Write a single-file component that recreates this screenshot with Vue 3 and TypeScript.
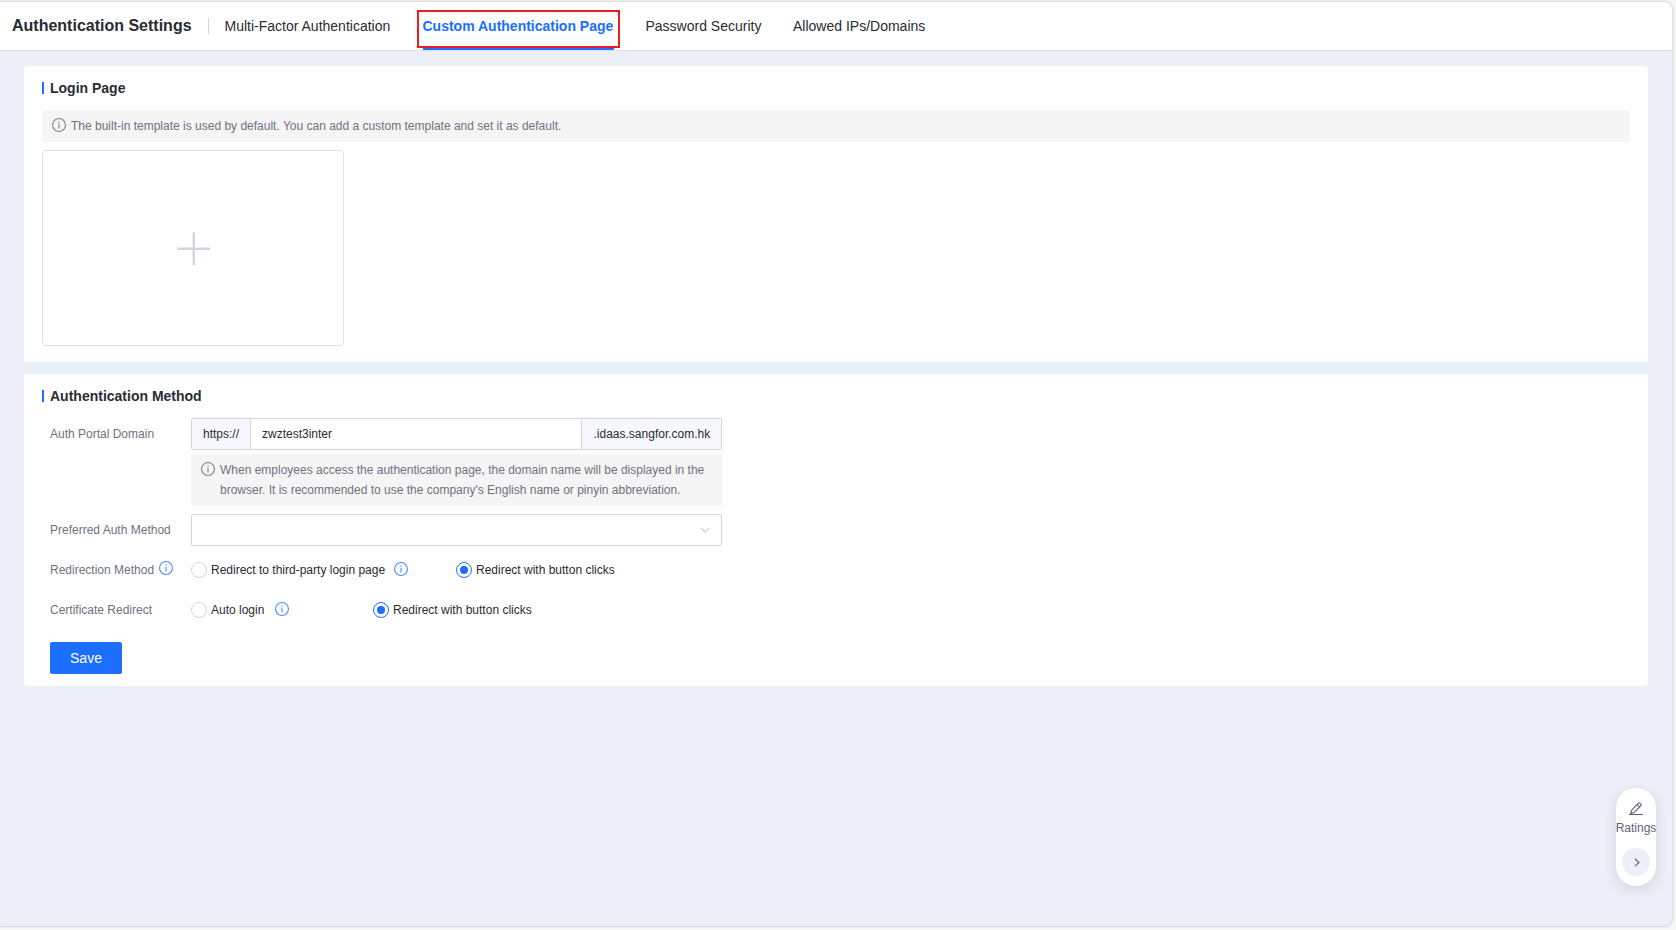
<script setup lang="ts">
import { ref } from 'vue'

interface Tab {
  key: string
  label: string
}

const tabs: Tab[] = [
  { key: 'mfa', label: 'Multi-Factor Authentication' },
  { key: 'custom', label: 'Custom Authentication Page' },
  { key: 'password', label: 'Password Security' },
  { key: 'allowed', label: 'Allowed IPs/Domains' },
]
const activeTab = ref<string>('custom')
const domain = ref<string>('zwztest3inter')
const redirection = ref<'auto' | 'click'>('click')
const certificate = ref<'auto' | 'click'>('click')
</script>

<template>
  <div class="page">
    <div class="window">
      <header class="header">
        <h1 class="title">Authentication Settings</h1>
        <span class="divider"></span>
        <nav class="tabs">
          <a
            v-for="tab in tabs"
            :key="tab.key"
            class="tab"
            :class="[tab.key, { active: tab.key === activeTab }]"
            @click="activeTab = tab.key"
          >{{ tab.label }}</a>
        </nav>
      </header>

      <main class="content">
        <section class="card login">
          <h2 class="card-title">Login Page</h2>
          <div class="notice">
            <svg class="info" viewBox="0 0 14 14"><circle cx="7" cy="7" r="6.45" /><path d="M7 5.8V10.4M7 3.5V4.7" /></svg>
            <span class="notice-text">The built-in template is used by default. You can add a custom template and set it as default.</span>
          </div>
          <div class="upload">
            <svg class="plus" viewBox="0 0 33 33"><path d="M0.4 16.8H33M16.8 0.4V33" /></svg>
          </div>
        </section>

        <section class="card method">
          <h2 class="card-title">Authentication Method</h2>

          <div class="row domain-row">
            <label class="label">Auth Portal Domain</label>
            <div class="field">
              <div class="group">
                <span class="addon pre">https://</span>
                <input v-model="domain" class="input" type="text" spellcheck="false" />
                <span class="addon post">.idaas.sangfor.com.hk</span>
              </div>
              <div class="hint">
                <svg class="info" viewBox="0 0 14 14"><circle cx="7" cy="7" r="6.45" /><path d="M7 5.8V10.4M7 3.5V4.7" /></svg>
                <p>When employees access the authentication page, the domain name will be displayed in the<br />browser. It is recommended to use the company's English name or pinyin abbreviation.</p>
              </div>
            </div>
          </div>

          <div class="row select-row">
            <label class="label">Preferred Auth Method</label>
            <div class="select">
              <svg class="chevron" viewBox="0 0 10 6"><path d="M1 1L5 5L9 1" /></svg>
            </div>
          </div>

          <div class="row radio-row">
            <label class="label">Redirection Method
              <svg class="info blue raised" viewBox="0 0 14 14"><circle cx="7" cy="7" r="6.45" /><path d="M7 5.8V10.4M7 3.5V4.7" /></svg>
            </label>
            <div class="option first" @click="redirection = 'auto'">
              <i class="radio" :class="{ on: redirection === 'auto' }"></i>
              <span>Redirect to third-party login page</span>
              <svg class="info blue" viewBox="0 0 14 14"><circle cx="7" cy="7" r="6.45" /><path d="M7 5.8V10.4M7 3.5V4.7" /></svg>
            </div>
            <div class="option" @click="redirection = 'click'">
              <i class="radio" :class="{ on: redirection === 'click' }"></i>
              <span>Redirect with button clicks</span>
            </div>
          </div>

          <div class="row radio-row">
            <label class="label">Certificate Redirect</label>
            <div class="option second" @click="certificate = 'auto'">
              <i class="radio" :class="{ on: certificate === 'auto' }"></i>
              <span>Auto login</span>
              <svg class="info blue" viewBox="0 0 14 14"><circle cx="7" cy="7" r="6.45" /><path d="M7 5.8V10.4M7 3.5V4.7" /></svg>
            </div>
            <div class="option" @click="certificate = 'click'">
              <i class="radio" :class="{ on: certificate === 'click' }"></i>
              <span>Redirect with button clicks</span>
            </div>
          </div>

          <button class="save" type="button">Save</button>
        </section>
      </main>

      <aside class="floating">
        <svg class="pencil" viewBox="0 0 14 14">
          <path d="M1.7 11.6L2.6 8.3L9.4 1.2Q10 0.6 10.6 1.1L12 2.3Q12.6 2.9 12 3.5L5 10.6ZM8.3 2.7L10.6 4.8" />
          <path d="M0 12.5H14" />
        </svg>
        <span class="rating-text">Ratings</span>
        <span class="next">
          <svg viewBox="0 0 6 9"><path d="M1 0.7L4.9 4.5L1 8.3" /></svg>
        </span>
      </aside>
    </div>
  </div>
</template>

<style>
html,
body {
  margin: 0;
  background: #f7f7f8;
}
</style>

<style scoped>
* {
  box-sizing: border-box;
}
.page {
  width: 1676px;
  height: 930px;
  padding: 2px 4px 4px 0;
  overflow: hidden;
  background: #f7f7f8;
  font-family: 'Liberation Sans', Arial, sans-serif;
  font-size: 12px;
  color: #282c33;
}
.window {
  position: relative;
  height: 924px;
  background: #eceff7;
  border-radius: 0 8px 8px 0;
  box-shadow: 0 0 3px rgba(0, 0, 0, 0.28);
}
.header {
  display: flex;
  align-items: center;
  height: 49px;
  padding-left: 12px;
  background: #fff;
  border-bottom: 1px solid #dfe1e8;
  border-radius: 0 8px 0 0;
}
.title {
  width: 180px;
  margin: 0;
  font-size: 16px;
  line-height: 24px;
  font-weight: 700;
  white-space: nowrap;
}
.divider {
  width: 1px;
  height: 16px;
  margin: 0 15.5px 0 16px;
  background: #d1d5de;
}
.tabs {
  display: flex;
  height: 48px;
}
.tab {
  position: relative;
  width: 166px;
  font-size: 14px;
  line-height: 48px;
  white-space: nowrap;
  cursor: pointer;
}
.tab.custom {
  width: 191px;
  margin-left: 32px;
}
.tab.password {
  width: 117px;
  margin-left: 32px;
}
.tab.allowed {
  margin-left: 30.5px;
}
.tab.active {
  color: #1c6eff;
  font-weight: 700;
  border-bottom: 3px solid #1c6eff;
}
.tab.active::after {
  content: '';
  position: absolute;
  box-sizing: border-box;
  left: -5.5px;
  top: 8px;
  width: 203px;
  height: 38px;
  border: 2px solid #ed1c24;
}
.content {
  display: flex;
  flex-direction: column;
  gap: 12px;
  padding: 15px 24px 0;
}
.card {
  background: #fff;
  border-radius: 4px;
}
.login {
  height: 296px;
  padding: 12px 18px;
}
.method {
  height: 312px;
  padding: 12px 26px;
}
.card-title {
  display: flex;
  align-items: center;
  gap: 6px;
  height: 20px;
  margin: 0;
  font-size: 14px;
  font-weight: 700;
}
.card-title::before {
  content: '';
  width: 2px;
  height: 12px;
  background: #1c6eff;
}
.method .card-title {
  margin-left: -8px;
}
.notice {
  display: flex;
  align-items: center;
  gap: 5px;
  height: 32px;
  margin-top: 12px;
  padding: 0 10px 2px;
  background: #f5f5f5;
  border-radius: 2px;
  color: #6d727f;
}
.notice-text {
  padding-top: 2px;
}
.info {
  display: block;
  flex: none;
  width: 14px;
  height: 14px;
  fill: none;
  stroke: #7c818d;
  stroke-width: 1.1;
}
.info.blue {
  stroke: #4b8dff;
}
.upload {
  display: flex;
  align-items: center;
  justify-content: center;
  width: 302px;
  height: 196px;
  margin-top: 8px;
  padding: 1px 0 0 1px;
  border: 1px solid #dfe1e8;
  border-radius: 4px;
}
.plus {
  width: 33px;
  height: 33px;
  fill: none;
  stroke: #d1d5de;
  stroke-width: 2.4;
}
.row {
  display: flex;
}
.label {
  display: flex;
  flex: none;
  width: 141px;
  line-height: 32px;
  color: #6d727f;
  white-space: nowrap;
}
.domain-row {
  margin-top: 12px;
}
.field {
  width: 531px;
}
.group {
  display: flex;
  height: 32px;
  border: 1px solid #d1d5de;
  border-radius: 2px;
}
.addon {
  flex: none;
  background: #f7f8fd;
  line-height: 30px;
  white-space: nowrap;
}
.pre {
  width: 59px;
  padding-left: 11px;
  border-right: 1px solid #d1d5de;
}
.post {
  width: 140px;
  padding-left: 11.5px;
  border-left: 1px solid #d1d5de;
}
.input {
  flex: 1;
  min-width: 0;
  padding: 0 11px;
  border: 0;
  outline: 0;
  font: inherit;
  color: inherit;
  background: transparent;
}
.hint {
  display: flex;
  gap: 5px;
  height: 52px;
  margin-top: 4px;
  padding: 6px 10px;
  border-radius: 2px;
  background: #f5f5f5;
  color: #6d727f;
}
.hint .info {
  margin-top: 2px;
}
.hint p {
  margin: 0;
  line-height: 20px;
  white-space: nowrap;
}
.select-row {
  margin-top: 8px;
}
.select {
  display: flex;
  align-items: center;
  justify-content: flex-end;
  width: 531px;
  height: 32px;
  padding: 0 11px 0 0;
  border: 1px solid #d1d5de;
  border-radius: 2px;
}
.chevron {
  width: 10px;
  height: 6px;
  fill: none;
  stroke: #c9cdd6;
  stroke-width: 1.1;
}
.radio-row {
  height: 32px;
  margin-top: 8px;
}
.option {
  display: flex;
  align-items: center;
  white-space: nowrap;
  cursor: pointer;
}
.option.first {
  width: 265px;
}
.option.second {
  width: 182px;
}
.option .info {
  margin: -2px 0 0 9px;
}
.option.second .info {
  margin-left: 11px;
}
.label .raised {
  margin: 7px 0 0 5px;
}
.radio {
  display: flex;
  align-items: center;
  justify-content: center;
  flex: none;
  width: 16px;
  height: 16px;
  margin-right: 4px;
  border: 1px solid #d1d5de;
  border-radius: 50%;
}
.radio.on {
  border-color: #1c6eff;
}
.radio.on::after {
  content: '';
  width: 8px;
  height: 8px;
  border-radius: 50%;
  background: #1c6eff;
}
.save {
  display: block;
  width: 72px;
  height: 32px;
  margin-top: 16px;
  padding: 0;
  border: 0;
  border-radius: 2px;
  background: #1c6eff;
  color: #fff;
  font-family: inherit;
  font-size: 14px;
  cursor: pointer;
}
.floating {
  position: absolute;
  left: 1616px;
  top: 786px;
  display: flex;
  flex-direction: column;
  align-items: center;
  width: 40px;
  height: 98px;
  padding-top: 14px;
  background: #fff;
  border-radius: 20px;
  box-shadow: 0 4px 14px rgba(40, 60, 80, 0.14);
  color: #5d6473;
}
.pencil {
  width: 14px;
  height: 14px;
  fill: none;
  stroke: #5d6473;
  stroke-width: 1.1;
}
.rating-text {
  margin-top: 4px;
  line-height: 16px;
}
.next {
  display: flex;
  align-items: center;
  justify-content: center;
  width: 28px;
  height: 28px;
  margin-top: 12px;
  border-radius: 50%;
  background: #ebeff7;
}
.next svg {
  width: 6px;
  height: 9px;
  margin-left: 1px;
  fill: none;
  stroke: #6d727f;
  stroke-width: 1.3;
}
</style>
